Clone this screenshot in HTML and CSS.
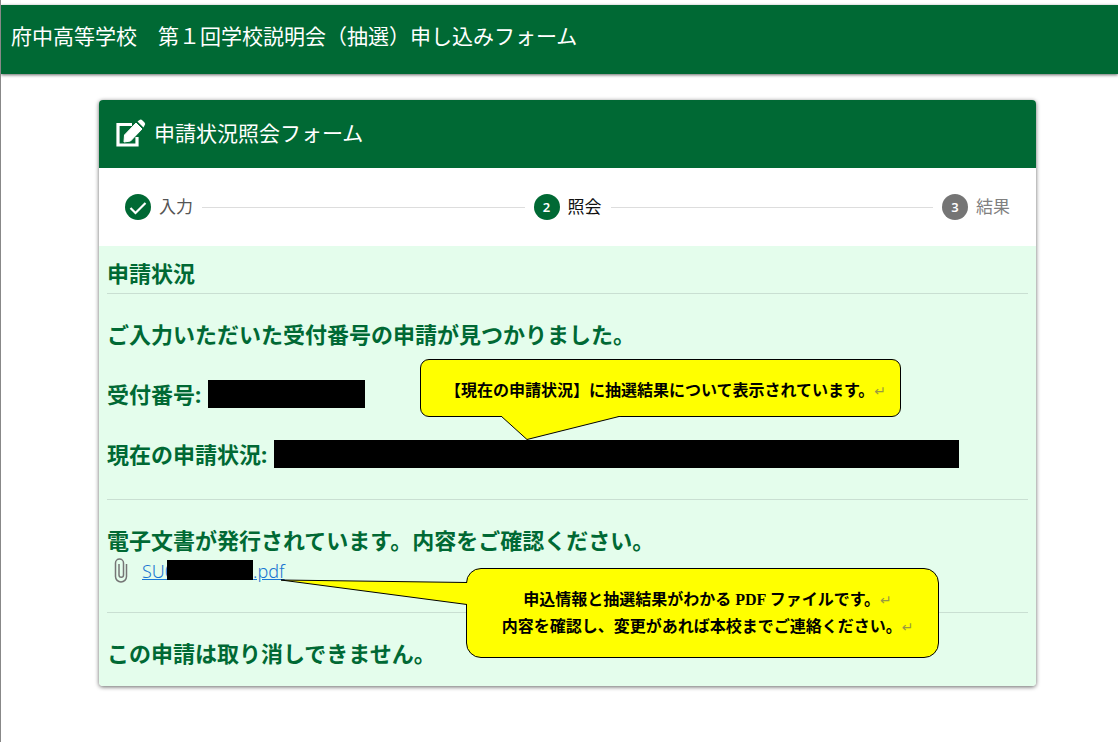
FILE: index.html
```
<!DOCTYPE html>
<html lang="ja">
<head>
	<meta charset="UTF-8">
	<meta name="viewport" content="width=device-width, initial-scale=1">
	<title>申請状況照会フォーム</title>
	<link rel="stylesheet" href="styles.css">
</head>
<body>
<header class="appbar">
	<h1>府中高等学校　第１回学校説明会（抽選）申し込みフォーム</h1>
</header>
<main class="container">
	<div class="card">
		<div class="card-header">
			<svg class="icon-edit" viewBox="0 0 30 28" width="30" height="28">
				<path d="M16 5.500H2V26H21V18" fill="none" stroke="#fff" stroke-width="3.200"/>
				<path d="M20 4L26 10L14.500 22L8 23L8.500 16Z" fill="#fff" stroke="#fff" stroke-linejoin="round"/>
				<path d="M21.500 2.500L23.500 1Q25 0 26.500 1.500L28.500 3.500Q30 5 28.500 6.500L27.500 8.500Z" fill="#fff"/>
			</svg>
			<h2>申請状況照会フォーム</h2>
		</div>
		<ol class="stepper">
			<li class="step">
				<svg class="step-no" viewBox="0 0 26 26">
					<path d="M5.500 14L10.500 19L20.500 9" fill="none" stroke="#fff" stroke-width="2.200"/>
				</svg>
				<span class="step-label">入力</span>
			</li>
			<li class="line"></li>
			<li class="step active">
				<span class="step-no">2</span>
				<span class="step-label">照会</span>
			</li>
			<li class="line"></li>
			<li class="step disabled">
				<span class="step-no">3</span>
				<span class="step-label">結果</span>
			</li>
		</ol>
		<div class="card-body">
			<h3 class="title">申請状況</h3>
			<section class="status">
				<p>ご入力いただいた受付番号の申請が見つかりました。</p>
				<p class="field">受付番号: <span class="mask mask-number"></span></p>
				<p class="field">現在の申請状況: <span class="mask mask-status"></span></p>
			</section>
			<section>
				<p>電子文書が発行されています。内容をご確認ください。</p>
				<div class="file">
					<svg class="icon-clip" viewBox="0 0 14 26" width="14" height="26">
						<path d="M12.500 6V18.500A5.500 5.500 0 0 1 1.500 18.500V5A4 4 0 0 1 9.500 5V17A2.250 2.250 0 0 1 5 17V6" fill="none" stroke="#757575" stroke-width="1.500"/>
					</svg>
					<a href="#">SU0<span class="mask mask-file"></span>.pdf</a>
				</div>
			</section>
			<section>
				<p>この申請は取り消しできません。</p>
			</section>

			<!-- 吹き出し -->
			<div class="callout callout-status">
				【現在の申請状況】に抽選結果について表示されています。<span class="ret">↵</span>
				<svg class="tail" viewBox="0 0 120 25" width="120" height="25">
					<path d="M0 0L26 23.500L120 0" fill="#ff0" stroke="#000"/>
				</svg>
			</div>
			<div class="callout callout-file">
				申込情報と抽選結果がわかる PDF ファイルです。<span class="ret">↵</span><br>
				内容を確認し、変更があれば本校までご連絡ください。<span class="ret">↵</span>
				<svg class="tail" viewBox="0 0 187 28" width="187" height="28">
					<path d="M187 3.500L1 1L187 25.500" fill="#ff0" stroke="#000"/>
				</svg>
			</div>
		</div>
	</div>
</main>
</body>
</html>
```
FILE: styles.css
```
* {
	box-sizing: border-box;
}
body {
	margin: 0;
	padding-top: 5px;
	min-height: 100vh;
	border-left: 1px solid #888;
	background: #fff;
	font-family: "Noto Sans", "Noto Sans CJK JP", sans-serif;
	color: #006934;
}
h1, h2, h3, p, ol {
	margin: 0;
	padding: 0;
}

.appbar {
	padding: 15px 10px 22px;
	background: #006934;
	box-shadow: 0 1px 3px rgba(0,0,0,.6);
	color: #fff;
}
.appbar h1, .card-header h2 {
	font-size: 21px;
	line-height: 32px;
	font-weight: 400;
}

.container {
	padding: 26px 82px 40px 98px;
}
.card {
	border-radius: 4px;
	box-shadow: 0 1px 4px rgba(0,0,0,.6);
}
.card-header {
	display: flex;
	align-items: center;
	gap: 8px;
	padding: 17px 17px 19px;
	border-radius: 4px 4px 0 0;
	background: #006934;
	color: #fff;
}

.stepper {
	display: flex;
	align-items: center;
	gap: 9px;
	padding: 26px;
	background: #fff;
	list-style: none;
}
.step {
	display: flex;
	align-items: center;
	gap: 8px;
	color: #555;
	font-size: 17px;
	line-height: 26px;
}
.step-no {
	width: 26px;
	height: 26px;
	border-radius: 50%;
	background: #006934;
	color: #fff;
	font-size: 13px;
	font-weight: 600;
	text-align: center;
}
.active {
	color: #111;
}
.disabled {
	color: #808080;
}
.disabled .step-no {
	background: #757575;
}
.line {
	flex: 1;
	height: 1px;
	background: #ddd;
}

.card-body {
	position: relative;
	padding: 11px 8px 0;
	border-radius: 0 0 4px 4px;
	background: #e4fdec;
	font-size: 22px;
	line-height: 32px;
	font-weight: 700;
}
.title {
	padding-bottom: 4px;
	border-bottom: 1px solid #c9dfd2;
	font-size: 22px;
}
.card-body section {
	padding: 24px 0 26px;
	border-bottom: 1px solid #c9dfd2;
}
.card-body .status {
	display: flex;
	flex-direction: column;
	gap: 28px;
	padding-bottom: 29px;
}
.card-body section:last-of-type {
	padding-bottom: 17px;
	border: 0;
}
.field {
	display: flex;
	align-items: center;
	gap: 7px;
}
.mask {
	height: 28px;
	background: #000;
}
.mask-number {
	width: 157px;
}
.mask-status {
	width: 685px;
}
.file {
	display: flex;
	align-items: center;
	gap: 14px;
	height: 30px;
	padding-left: 7px;
	font-size: 18px;
	line-height: 30px;
	font-weight: 300;
}
.file a {
	color: #1976d2;
}
.mask-file {
	display: inline-block;
	width: 86px;
	height: 20px;
	margin: 0 0 -2px -8px;
}

.callout {
	position: absolute;
	border: 1px solid #000;
	background: #ff0;
	color: #000;
	font-family: "Liberation Serif", "Noto Sans CJK JP", serif;
	font-size: 16px;
	line-height: 27px;
	text-align: center;
	white-space: nowrap;
}
.callout-status {
	left: 321px;
	top: 113px;
	width: 481px;
	padding: 17px 0 12px 10px;
	border-radius: 9px;
}
.callout-file {
	left: 367px;
	top: 322px;
	width: 473px;
	padding: 17px 0 17px 10px;
	border-radius: 15px;
}
.ret {
	color: #999940;
	font-family: "DejaVu Sans", sans-serif;
	font-size: 14px;
	line-height: 1;
	font-weight: 400;
}
.tail {
	position: absolute;
}
.callout-status .tail {
	left: 80px;
	top: 56px;
}
.callout-file .tail {
	right: 471px;
	top: 10px;
}
```
